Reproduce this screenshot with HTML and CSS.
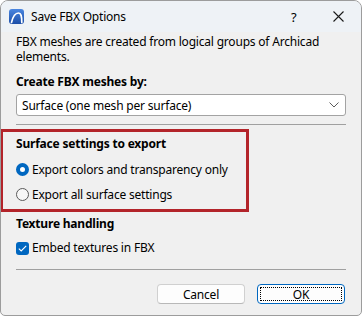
FILE: index.html
```html
<!DOCTYPE html>
<html lang="en">
<head>
  <meta charset="UTF-8">
  <meta name="viewport" content="width=device-width, initial-scale=1.0">
  <title>Save FBX Options</title>
  <link rel="stylesheet" href="styles.css">
</head>
<body>
  <div class="window">
    <div class="titlebar">
      <svg class="app-icon" width="15" height="15" viewBox="0 0 15 15">
        <defs>
          <linearGradient id="logo-bg" x1="0" y1="0" x2="0" y2="1">
            <stop offset="0" stop-color="#4a86e0"/>
            <stop offset="1" stop-color="#1c4ea8"/>
          </linearGradient>
        </defs>
        <rect x="0" y="0" width="15" height="15" rx="3" fill="url(#logo-bg)"/>
        <path d="M2.5 13.5 C4 7 6.5 4 9.5 4 C12 4 12.8 7 12.8 13.5" fill="none" stroke="#fff" stroke-width="1.7" stroke-linecap="round"/>
      </svg>
      <span class="title">Save FBX Options</span>
      <span class="help">?</span>
      <svg class="close" width="11" height="11" viewBox="0 0 11 11">
        <path d="M0.5 0.5 L10.5 10.5 M10.5 0.5 L0.5 10.5" stroke="#1a1a1a" stroke-width="1.1"/>
      </svg>
    </div>

    <div class="content">
      <p class="intro">FBX meshes are created from logical groups of Archicad<br>elements.</p>

      <div class="label label-create">Create FBX meshes by:</div>
      <div class="select">
        <span>Surface (one mesh per surface)</span>
        <svg width="10" height="6" viewBox="0 0 10 6">
          <path d="M0.5 0.5 L5 5 L9.5 0.5" fill="none" stroke="#5c5c5c" stroke-width="1"/>
        </svg>
      </div>
      <div class="sep sep-top"></div>

      <div class="highlight">
        <div class="label">Surface settings to export</div>
        <label class="option option-first"><span class="radio checked"></span>Export colors and transparency only</label>
        <label class="option"><span class="radio"></span>Export all surface settings</label>
      </div>

      <div class="label label-texture">Texture handling</div>
      <label class="option option-check">
        <span class="checkbox">
          <svg width="9" height="7" viewBox="0 0 9 7">
            <path d="M0.8 3.6 L3.2 5.9 L8.2 0.9" fill="none" stroke="#fff" stroke-width="1.1"/>
          </svg>
        </span>Embed textures in FBX
      </label>
      <div class="sep sep-bottom"></div>

      <div class="buttons">
        <button class="btn">Cancel</button>
        <button class="btn btn-default"><span class="focus-ring">OK</span></button>
      </div>
    </div>
  </div>
</body>
</html>
```

FILE: styles.css
```css
/* Windows 11 style dialog */
body {
  margin: 0;
  background: #ffffff;
  font-family: "Segoe UI", "Noto Sans", sans-serif;
  font-size: 12px;
  letter-spacing: -0.2px;
  color: #000000;
}
.window {
  width: 362px;
  height: 316px;
  box-sizing: border-box;
  border: 1px solid #9c9c9c;
  border-radius: 8px 8px 5px 5px;
  background: #f0f0f0;
  overflow: hidden;
}
.titlebar {
  height: 31px;
  background: #eef2f6;
  display: flex;
  align-items: center;
  padding-left: 8px;
}
.app-icon {
  flex: none;
}
.title {
  margin-left: 7px;
  flex: 1;
}
.help {
  width: 14px;
  font-size: 13px;
  margin-right: 28px;
}
.close {
  margin-right: 17px;
}
.content {
  padding: 0 15px;
}
.intro {
  margin: 2px 0 0;
  line-height: 15px;
}
.label {
  font-weight: bold;
  line-height: 14px;
}
.label-create {
  margin-top: 11px;
}
.select {
  margin-top: 5px;
  height: 22px;
  box-sizing: border-box;
  border: 1px solid #a3a3a3;
  border-radius: 3px;
  background: #ffffff;
  display: flex;
  align-items: center;
  justify-content: space-between;
  padding: 0 6px 0 5px;
}
.sep {
  height: 1px;
  background: #a0a0a0;
}
.sep-top {
  margin-top: 8px;
}
.highlight {
  margin: 4px 0 0 -16px;
  width: 249px;
  box-sizing: border-box;
  border: 3px solid #b3242a;
  padding: 5px 0 2px 13px;
}
.option {
  display: flex;
  align-items: center;
  gap: 3px;
  height: 25px;
  line-height: 14px;
}
.option-first {
  margin-top: 6px;
}
.radio {
  width: 13px;
  height: 13px;
  box-sizing: border-box;
  border-radius: 50%;
  border: 1px solid #5a5a5a;
  background: #f7f7f7;
}
.radio.checked {
  border: 4px solid #0067c0;
  background: #ffffff;
}
.label-texture {
  margin-top: 5px;
}
.option-check {
  margin-top: 5px;
  height: 24px;
}
.checkbox {
  width: 13px;
  height: 13px;
  border-radius: 3px;
  background: #0067c0;
  display: flex;
  align-items: center;
  justify-content: center;
}
.sep-bottom {
  margin-top: 9px;
}
.buttons {
  margin-top: 14px;
  display: flex;
  justify-content: flex-end;
  gap: 12px;
  padding-right: 1px;
}
.btn {
  width: 88px;
  height: 20px;
  box-sizing: border-box;
  border: 1px solid #d0d0d0;
  border-bottom-color: #b8b8b8;
  border-radius: 4px;
  background: #fdfdfd;
  font-family: inherit;
  font-size: 12px;
  letter-spacing: inherit;
  color: #000000;
  padding: 0;
}
.btn-default {
  border: 1px solid #0067c0;
  padding: 2px;
}
.focus-ring {
  display: flex;
  align-items: center;
  justify-content: center;
  height: 100%;
  box-sizing: border-box;
  border: 1px dotted #000000;
}
```
